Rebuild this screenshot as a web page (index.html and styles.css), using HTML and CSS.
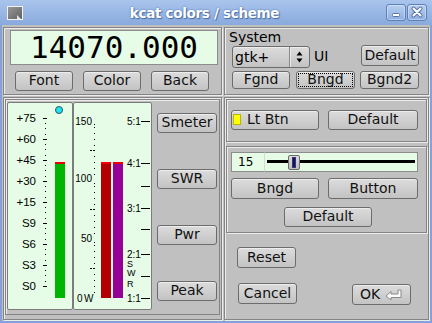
FILE: index.html
```html
<!DOCTYPE html>
<html lang="en">
<head>
  <meta charset="UTF-8" />
  <title>kcat colors / scheme</title>
  <link rel="stylesheet" href="styles.css">
</head>
<body>
<div class="win">

  <!-- barra de titulo -->
  <div class="titlebar">
    <svg class="wicon" width="16" height="14" viewBox="0 0 16 14">
      <defs>
        <linearGradient id="wg" x1="0" y1="0" x2="1" y2="1">
          <stop offset="0" stop-color="#9a9a9a"/>
          <stop offset="1" stop-color="#5e5e5e"/>
        </linearGradient>
      </defs>
      <rect x="0.5" y="0.5" width="15" height="13" fill="url(#wg)" stroke="#f2f2f2"/>
      <path d="M10 9 L14 13 L10 13 Z" fill="#fff" opacity="0.8"/>
    </svg>
    <div class="title">kcat colors / scheme</div>
    <div class="tbtns">
      <div class="tbtn">
        <svg width="18" height="15" viewBox="0 0 18 15">
          <rect x="5.5" y="8.5" width="7" height="3" rx="1" fill="#fff" stroke="#5873a6"/>
        </svg>
      </div>
      <div class="tbtn">
        <svg width="18" height="15" viewBox="0 0 18 15">
          <path d="M5.5 3.5 L12.5 10.5 M12.5 3.5 L5.5 10.5" stroke="#5873a6" stroke-width="4" stroke-linecap="round"/>
          <path d="M5.5 3.5 L12.5 10.5 M12.5 3.5 L5.5 10.5" stroke="#fff" stroke-width="2" stroke-linecap="round"/>
        </svg>
      </div>
    </div>
  </div>

  <div class="body">

    <!-- frequencia -->
    <div class="grp freq">
      <div class="display">14070.000</div>
      <div class="freq-btns">
        <div class="btn w58">Font</div>
        <div class="btn w58">Color</div>
        <div class="btn w58">Back</div>
      </div>
    </div>

    <!-- esquema -->
    <div class="grp sys">
      <div class="sys-label">System</div>
      <div class="sys-row1">
        <div class="choice">
          <span class="choice-text">gtk+</span>
          <span class="choice-arrows">
            <svg width="7" height="12" viewBox="0 0 7 12">
              <path d="M0.5 4.5 L3.5 0.5 L6.5 4.5 Z M0.5 7.5 L3.5 11.5 L6.5 7.5 Z" fill="#000"/>
            </svg>
          </span>
        </div>
        <span class="ui-label">UI</span>
        <div class="btn sys-default">Default</div>
      </div>
      <div class="sys-row2">
        <div class="btn small w58">Fgnd</div>
        <div class="btn small w59 focus">Bngd</div>
        <div class="btn small w59">Bgnd2</div>
      </div>
    </div>

    <!-- medidores -->
    <div class="grp meters">
      <div class="mframe">
        <div class="panel spanel">
          <svg width="64" height="206" viewBox="0 0 64 206">
            <g class="mlabel" text-anchor="end">
              <text x="28" y="19">+75</text>
              <text x="28" y="40">+60</text>
              <text x="28" y="61">+45</text>
              <text x="28" y="82">+30</text>
              <text x="28" y="103">+15</text>
              <text x="28" y="124">S9</text>
              <text x="28" y="145">S6</text>
              <text x="28" y="166">S3</text>
              <text x="28" y="187">S0</text>
            </g>
            <path stroke="#000" stroke-width="1" d="M35 15.5h4 M35 36.5h4 M35 57.5h4 M35 78.5h4 M35 99.5h4 M35 120.5h4 M35 141.5h4 M35 162.5h4 M35 183.5h4
              M37 20.5h1 M37 25.5h1 M37 31.5h1
              M37 41.5h1 M37 46.5h1 M37 52.5h1
              M37 62.5h1 M37 67.5h1 M37 73.5h1
              M37 83.5h1 M37 88.5h1 M37 94.5h1
              M37 104.5h1 M37 109.5h1 M37 115.5h1
              M37 125.5h1 M37 130.5h1 M37 136.5h1
              M37 146.5h1 M37 151.5h1 M37 157.5h1
              M37 167.5h1 M37 172.5h1 M37 178.5h1"/>
            <circle cx="51" cy="7" r="3.5" fill="#1fe3f2" stroke="#2d5560"/>
            <rect x="47" y="59" width="10" height="2" fill="#f00000"/>
            <rect x="47" y="61" width="10" height="134" fill="#00b400"/>
          </svg>
        </div>
        <div class="panel ppanel">
          <svg width="77" height="206" viewBox="0 0 77 206">
            <g class="plabel" text-anchor="end">
              <text x="18" y="22">150</text>
              <text x="18" y="79">100</text>
              <text x="18" y="139">50</text>
            </g>
            <text class="plabel" x="3" y="199">0</text>
            <text class="plabel" x="10" y="199">W</text>
            <path stroke="#000" stroke-width="1" d="M20 21.5h1 M20 24.5h1 M20 30.5h1 M20 36.5h1 M20 42.5h1
              M16 47.5h2 M19 47.5h2
              M20 53.5h1 M20 59.5h1 M20 65.5h1 M20 71.5h1 M20 80.5h1 M20 83.5h1 M20 89.5h1 M20 95.5h1 M20 101.5h1
              M16 106.5h2 M19 106.5h2
              M20 112.5h1 M20 118.5h1 M20 124.5h1 M20 130.5h1 M20 139.5h1 M20 142.5h1 M20 148.5h1 M20 154.5h1 M20 160.5h1
              M16 165.5h2 M19 165.5h2
              M20 171.5h1 M20 177.5h1 M20 183.5h1 M20 189.5h1"/>
            <rect x="27" y="59" width="10" height="2" fill="#f00000"/>
            <rect x="27" y="61" width="10" height="134" fill="#b40000"/>
            <rect x="39" y="59" width="10" height="2" fill="#f00000"/>
            <rect x="39" y="61" width="10" height="134" fill="#960096"/>
            <g class="slabel">
              <text x="53" y="22">5:1</text>
              <text x="53" y="64">4:1</text>
              <text x="53" y="109">3:1</text>
              <text x="53" y="155">2:1</text>
              <text x="53" y="199">1:1</text>
            </g>
            <g class="swr">
              <text x="53" y="164">S</text>
              <text x="53" y="173">W</text>
              <text x="53" y="184">R</text>
            </g>
            <path stroke="#000" stroke-width="1" d="M67 18.5h9 M67 60.5h9 M67 83.5h9 M67 105.5h9 M67 126.5h9 M67 151.5h9 M67 173.5h9 M67 195.5h9"/>
          </svg>
        </div>
        <div class="meter-btns">
          <div class="btn w60">Smeter</div>
          <div class="btn w60">SWR</div>
          <div class="btn w60">Pwr</div>
          <div class="btn w60">Peak</div>
        </div>
      </div>
    </div>

    <!-- coluna direita -->
    <div class="grp rightcol">
      <div class="grp sub ltgrp">
        <div class="btn w88 ltbtn"><span class="light"></span>Lt Btn</div>
        <div class="btn w90">Default</div>
      </div>
      <div class="grp sub slidegrp">
        <div class="slide-row">
          <div class="valbox">15</div>
          <div class="slider">
            <div class="track"></div>
            <div class="thumb"><span class="thumb-bar"></span></div>
          </div>
        </div>
        <div class="slide-btns">
          <div class="btn w88 h21">Bngd</div>
          <div class="btn w90 h21">Button</div>
        </div>
        <div class="btn w88 slide-default">Default</div>
      </div>
      <div class="btn w59 h21 reset">Reset</div>
      <div class="final-row">
        <div class="btn w59 h21 cancel">Cancel</div>
        <div class="btn w59 h21 ok">OK
          <svg width="18" height="12" viewBox="0 0 18 12">
            <path d="M1 7 L6 2.5 L6 5 L13 5 L13 1 L16 1 L16 8.5 L6 8.5 L6 11 Z" fill="#fbfbfb" stroke="#8a8a8a" stroke-linejoin="round"/>
          </svg>
        </div>
      </div>
    </div>

  </div>
</div>
</body>
</html>
```

FILE: styles.css
```css
* {
  box-sizing: border-box;
}

body {
  margin: 0;
  font-family: "DejaVu Sans", sans-serif;
  font-size: 14px;
  color: #000;
}

.win {
  width: 432px;
  height: 323px;
  display: flex;
  flex-direction: column;
  background: #c0c0c0;
}

/* barra de titulo */
.titlebar {
  height: 25px;
  display: flex;
  align-items: center;
  background: linear-gradient(#a9c5ed, #89aadd);
}

.wicon {
  margin-left: 7px;
}

.title {
  flex: 1;
  text-align: center;
  color: #fff;
  font-weight: bold;
  font-size: 13.5px;
  letter-spacing: -0.3px;
  text-shadow: 0 0 2px #4d6fa6, 1px 1px 1px #4d6fa6;
}

.tbtns {
  display: flex;
  gap: 1px;
  margin-right: 5px;
}

.tbtn {
  width: 20px;
  height: 17px;
  border: 1px solid #5e7fb7;
  border-radius: 3px;
  background: linear-gradient(#b8cff1, #8fafe0);
  box-shadow: inset 0 0 0 1px rgba(255,255,255,0.35);
}

.tbtn svg {
  display: block;
}

/* corpo */
.body {
  flex: 1;
  display: grid;
  grid-template-columns: 219px 205px;
  grid-template-rows: 68px 223px;
  gap: 2px;
  padding: 2px 1px 0;
  border: 2px solid #83a3d8;
  border-top: 0;
}

.grp {
  border: 1px solid #848484;
  box-shadow: inset 1px 1px 0 #ececec, 1px 1px 0 #ececec;
}

/* botoes */
.btn {
  height: 20px;
  display: flex;
  align-items: center;
  justify-content: center;
  padding-bottom: 2px;
  border: 1px solid #6c6c6c;
  border-radius: 3px;
  background: linear-gradient(#dcdcdc, #c3c3c3);
  box-shadow: inset 0 1px 0 #ededed;
  color: #111;
  line-height: 1;
  white-space: nowrap;
}

.btn.small { height: 18px; }
.btn.h21 { height: 21px; }
.w58 { width: 58px; }
.w59 { width: 59px; }
.w60 { width: 60px; }
.w88 { width: 88px; }
.w90 { width: 90px; }

.btn.focus {
  outline: 1px dotted #000;
  outline-offset: -3px;
}

/* frequencia */
.freq {
  padding: 2px 0 0 6px;
}

.display {
  width: 208px;
  height: 35px;
  border: 1px solid #8c8c8c;
  background: #e6fce6;
  font-family: "DejaVu Sans Mono", monospace;
  font-size: 31px;
  line-height: 32px;
  text-align: center;
}

.freq-btns {
  display: flex;
  gap: 10px;
  margin: 6px 0 0 5px;
}

/* esquema */
.sys {
  padding: 0 9px 0 7px;
}

.sys-label {
  margin: 2px 0 0 -3px;
  line-height: 14px;
}

.sys-row1 {
  display: flex;
  height: 23px;
  margin-top: 1px;
}

.choice {
  align-self: flex-end;
  width: 78px;
  height: 22px;
  display: flex;
  border: 1px solid #6c6c6c;
  border-radius: 3px;
  background: linear-gradient(#dcdcdc, #c3c3c3);
  box-shadow: inset 0 1px 0 #ededed;
}

.choice-text {
  flex: 1;
  padding: 1px 0 0 2px;
  line-height: 18px;
}

.choice-arrows {
  width: 20px;
  display: flex;
  align-items: center;
  justify-content: center;
  border-left: 1px solid #8a8a8a;
  box-shadow: inset 1px 0 0 #e8e8e8;
}

.ui-label {
  margin: 3px 0 0 4px;
}

.sys-default {
  width: 58px;
  height: 21px;
  margin-left: auto;
}

.sys-row2 {
  display: flex;
  margin-top: 3px;
}

.sys-row2 .btn + .btn {
  margin-left: 5px;
}

.sys-row2 .btn:nth-child(2) {
  margin-left: 6px;
}

/* medidores */
.meters {
  padding: 1px;
}

.mframe {
  height: 216px;
  display: flex;
  align-items: flex-start;
  padding: 2px 1px 0;
  border: 1px solid #848484;
  box-shadow: inset 1px 1px 0 #ececec;
}

.panel {
  height: 208px;
  border: 1px solid #7c7c7c;
  border-radius: 2px;
  background: #e6fce6;
}

.panel svg {
  display: block;
}

.spanel { width: 66px; }
.ppanel { width: 79px; }

.mlabel text {
  font-family: "Liberation Sans", sans-serif;
  font-size: 11.5px;
}

.plabel, .plabel text, .slabel text {
  font-family: "Liberation Sans", sans-serif;
  font-size: 10px;
}

.swr text {
  font-family: "Liberation Sans", sans-serif;
  font-size: 9px;
}

.meter-btns {
  display: flex;
  flex-direction: column;
  gap: 36px;
  margin-left: 5px;
  padding-top: 11px;
}

/* coluna direita */
.rightcol {
  padding: 1px;
}

.sub {
  padding-left: 4px;
}

.ltgrp {
  height: 43px;
  display: flex;
  gap: 9px;
  padding-top: 10px;
}

.ltbtn {
  justify-content: flex-start;
  padding-left: 1px;
}

.light {
  width: 8px;
  height: 11px;
  margin: 1px 6px 0 0;
  background: #ffff00;
  border: 1px solid #b8b800;
}

.slidegrp {
  height: 87px;
  margin-top: 4px;
  padding-top: 5px;
}

.slide-row {
  display: flex;
}

.valbox {
  width: 34px;
  height: 20px;
  padding-left: 6px;
  border: 1px solid #8c8c8c;
  border-right-color: #d8d8d8;
  background: #e6fce6;
  font-size: 12px;
  line-height: 18px;
}

.slider {
  position: relative;
  width: 153px;
  height: 20px;
  display: flex;
  align-items: center;
  padding: 0 2px;
  border: 1px solid #8c8c8c;
  border-left: 0;
  background: #e6fce6;
}

.track {
  flex: 1;
  height: 3px;
  margin-top: -1px;
  background: #000;
}

.thumb {
  position: absolute;
  left: 23px;
  top: 2px;
  width: 12px;
  height: 15px;
  padding: 1px 0 0 3px;
  border: 1px solid #6c6c6c;
  border-radius: 2px;
  background: linear-gradient(#dcdcdc, #bdbdbd);
}

.thumb-bar {
  display: block;
  width: 4px;
  height: 11px;
  border: 1px solid #3a3a6a;
  background: #101070;
}

.slide-btns {
  display: flex;
  gap: 9px;
  margin-top: 6px;
}

.slide-default {
  margin: 8px 0 0 53px;
}

.reset {
  margin: 14px 0 0 11px;
}

.final-row {
  display: flex;
  align-items: flex-start;
  margin: 15px 0 0 12px;
}

.ok {
  gap: 5px;
  margin: 1px 0 0 55px;
}

.ok svg {
  margin-top: 2px;
}
```
